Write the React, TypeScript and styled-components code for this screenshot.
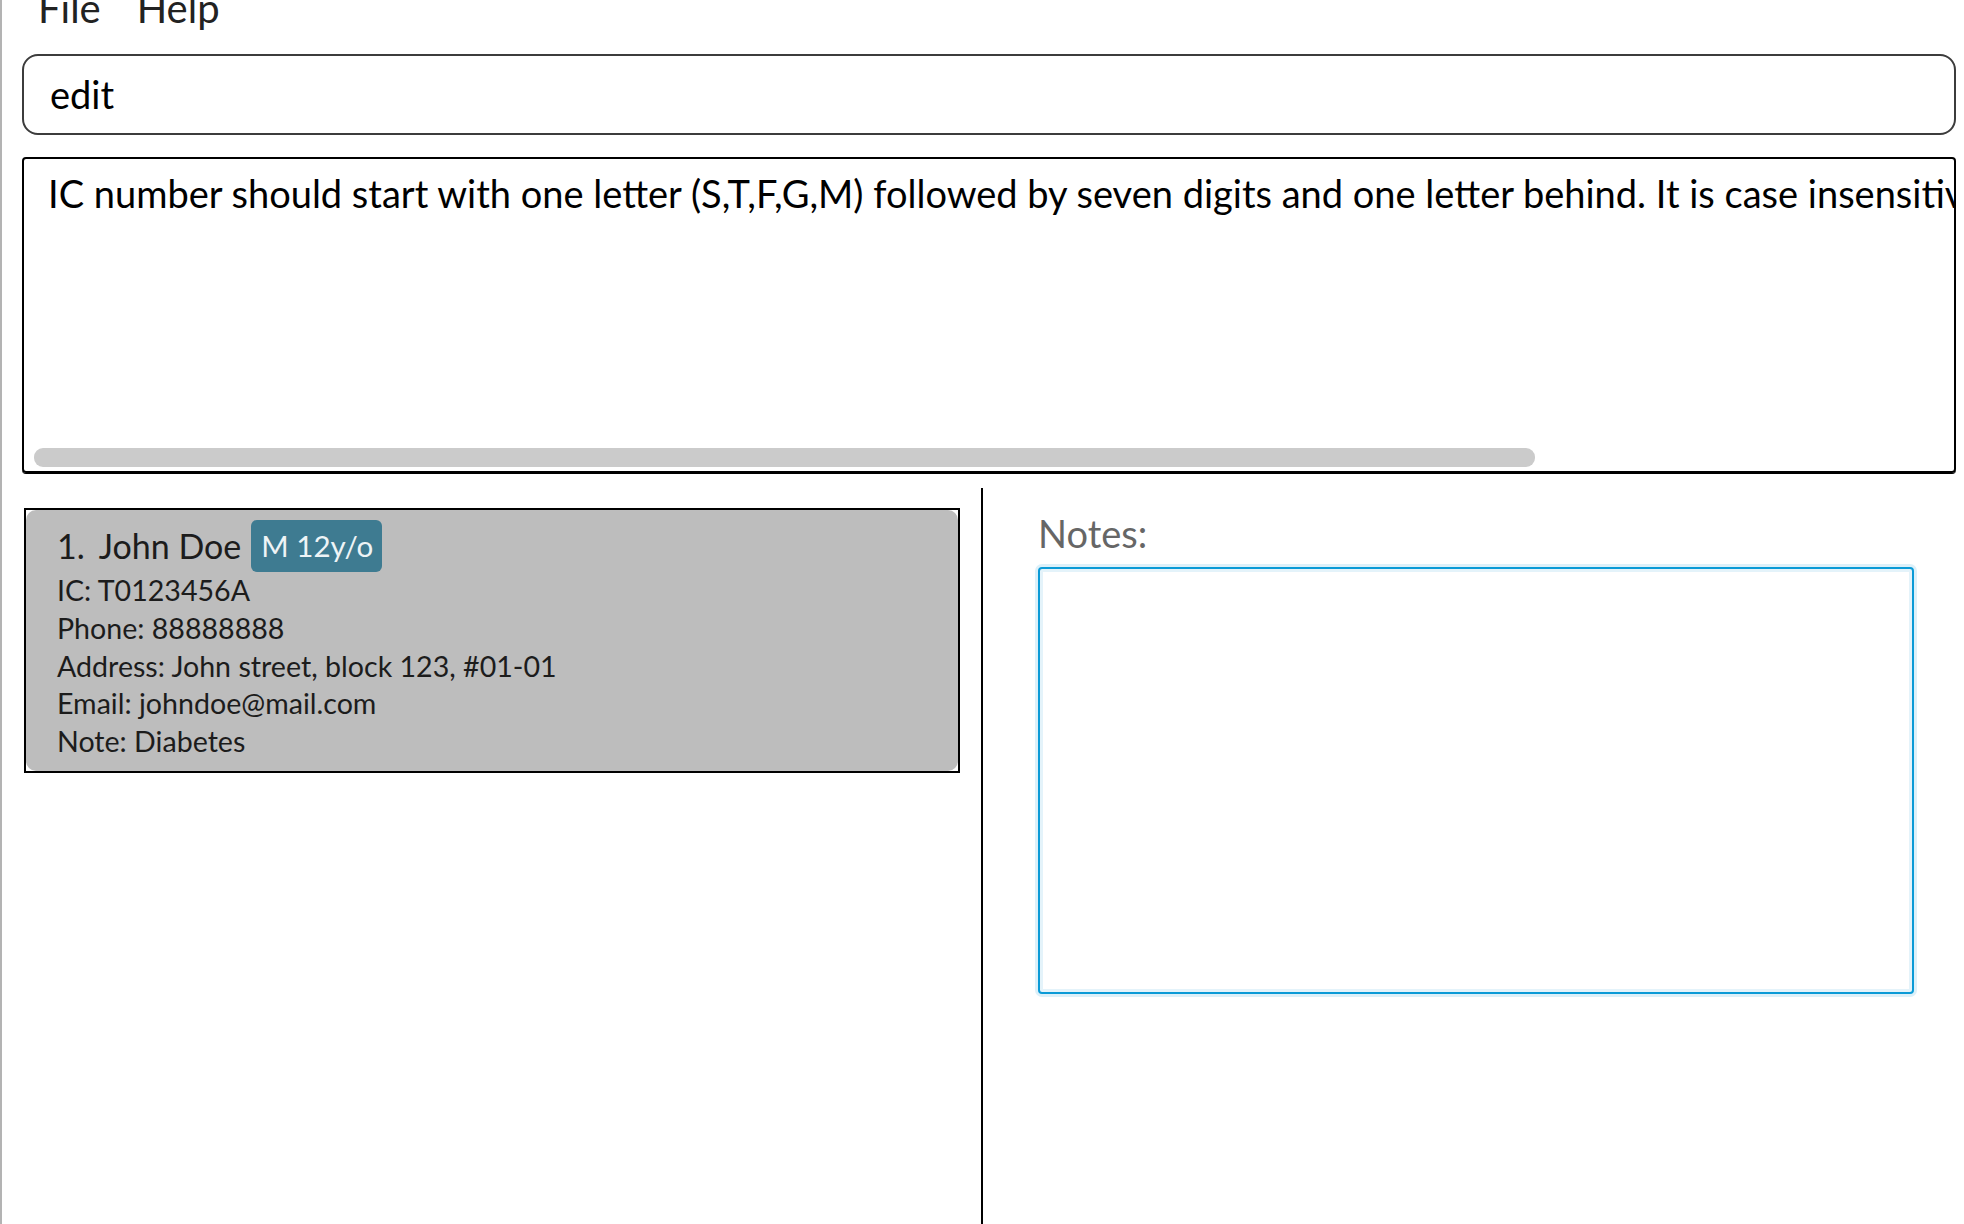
import React from 'react'
import styled, { createGlobalStyle } from 'styled-components'

const GlobalStyle = createGlobalStyle`
  html, body {
    margin: 0;
    padding: 0;
    height: 100%;
    overflow: hidden;
    background: #ffffff;
  }
  body {
    font-family: Lato, "Open Sans", sans-serif;
  }
  * {
    box-sizing: border-box;
  }
`

const errorText =
  'IC number should start with one letter (S,T,F,G,M) followed by seven digits and one letter behind. It is case insensitive.'

interface Person {
  name: string
  gender: string
  age: number
  ic: string
  phone: string
  address: string
  email: string
  note: string
}

const people: Person[] = [
  {
    name: 'John Doe',
    gender: 'M',
    age: 12,
    ic: 'T0123456A',
    phone: '88888888',
    address: 'John street, block 123, #01-01',
    email: 'johndoe@mail.com',
    note: 'Diabetes',
  },
]

const App: React.FC = () => {
  return (
    <>
      <GlobalStyle />
      <StyledWindow>
        <StyledMenuBar>
          <StyledMenuItem>File</StyledMenuItem>
          <StyledMenuItem>Help</StyledMenuItem>
        </StyledMenuBar>
        <StyledTop>
          <StyledCommandBox>
            <span>edit</span>
          </StyledCommandBox>
          <StyledResultBox>
            <StyledResultText>{errorText}</StyledResultText>
            <StyledScrollTrack>
              <StyledScrollThumb style={{ width: '78.6%' }} />
            </StyledScrollTrack>
          </StyledResultBox>
        </StyledTop>
        <StyledSplit>
          <StyledListPane>
            {people.map((p, i) => (
              <StyledCard key={p.ic}>
                <div className='inner'>
                  <StyledCardHeader>
                    <StyledIndex>{i + 1}.</StyledIndex>
                    <StyledName>{p.name}</StyledName>
                    <StyledBadge>
                      {p.gender} {p.age}y/o
                    </StyledBadge>
                  </StyledCardHeader>
                  <StyledDetail>IC: {p.ic}</StyledDetail>
                  <StyledDetail>Phone: {p.phone}</StyledDetail>
                  <StyledDetail>Address: {p.address}</StyledDetail>
                  <StyledDetail>Email: {p.email}</StyledDetail>
                  <StyledDetail>Note: {p.note}</StyledDetail>
                </div>
              </StyledCard>
            ))}
          </StyledListPane>
          <StyledDivider />
          <StyledNotesPane>
            <StyledNotesLabel>Notes:</StyledNotesLabel>
            <StyledNotesArea defaultValue='' />
          </StyledNotesPane>
        </StyledSplit>
      </StyledWindow>
    </>
  )
}

const StyledWindow = styled.div`
  height: 100vh;
  display: flex;
  flex-direction: column;
  border-left: 2px solid #b3b3b3;
  overflow: hidden;
`
const StyledMenuBar = styled.div`
  display: flex;
  align-items: flex-start;
  height: 56px;
  margin-top: -12px;
  padding-left: 18px;
  flex-shrink: 0;
`
const StyledMenuItem = styled.div`
  padding: 0 18px;
  font-size: 40px;
  line-height: 40px;
  color: #222222;
`
const StyledTop = styled.div`
  display: flex;
  flex-direction: column;
  padding: 10px 8px 0 20px;
  flex-shrink: 0;
`
const StyledCommandBox = styled.div`
  height: 81px;
  border: 2px solid #3c3c3c;
  border-radius: 16px;
  display: flex;
  align-items: center;
  padding: 0 0 2px 26px;
  font-size: 38px;
  line-height: 1;
  color: #000000;
`
const StyledResultBox = styled.div`
  margin-top: 22px;
  height: 316px;
  border: 2px solid #000000;
  border-radius: 4px;
  box-shadow: 0 1px 0 #000000;
  display: flex;
  flex-direction: column;
  overflow: hidden;
`
const StyledResultText = styled.div`
  flex: 1;
  padding: 12px 0 0 24px;
  font-size: 38px;
  line-height: 1.2;
  white-space: nowrap;
  color: #000000;
`
const StyledScrollTrack = styled.div`
  padding: 0 10px 4px 10px;
`
const StyledScrollThumb = styled.div`
  height: 19px;
  border-radius: 9px;
  background: #cbcbcb;
`
const StyledSplit = styled.div`
  flex: 1;
  display: flex;
  margin-top: 15px;
  min-height: 0;
`
const StyledListPane = styled.div`
  flex: 0 0 979px;
  padding: 20px 21px 0 22px;
`
const StyledCard = styled.div`
  border: 2px solid #000000;
  background: #ffffff;
  .inner {
    background: #bdbdbd;
    border-radius: 10px;
    padding: 10px 0 10px 31px;
    color: #1c1c1c;
  }
`
const StyledCardHeader = styled.div`
  display: flex;
  align-items: center;
  height: 52px;
`
const StyledIndex = styled.span`
  font-size: 34px;
  line-height: 52px;
  margin-right: 14px;
`
const StyledName = styled.span`
  font-size: 34px;
  line-height: 52px;
  margin-right: 10px;
`
const StyledBadge = styled.span`
  height: 52px;
  padding: 0 9px 0 10px;
  border-radius: 6px;
  background: #3e7b91;
  color: #eef4f6;
  font-size: 29.5px;
  line-height: 52px;
`
const StyledDetail = styled.div`
  font-size: 28.6px;
  line-height: 37.75px;
`
const StyledDivider = styled.div`
  flex: 0 0 2px;
  background: #000000;
`
const StyledNotesPane = styled.div`
  flex: 1;
  display: flex;
  flex-direction: column;
  padding: 23px 50px 0 55px;
`
const StyledNotesLabel = styled.div`
  font-size: 38px;
  line-height: 1.2;
  color: #666666;
`
const StyledNotesArea = styled.textarea`
  margin-top: 10px;
  height: 427px;
  width: 100%;
  resize: none;
  outline: none;
  border: 2px solid #0a9ad6;
  border-radius: 4px;
  background: #ffffff;
  box-shadow: 0 0 0 3px #dcf0f9, inset 0 0 0 3px #e4f3fa;
  font-family: Lato, sans-serif;
  font-size: 30px;
`

export default App
